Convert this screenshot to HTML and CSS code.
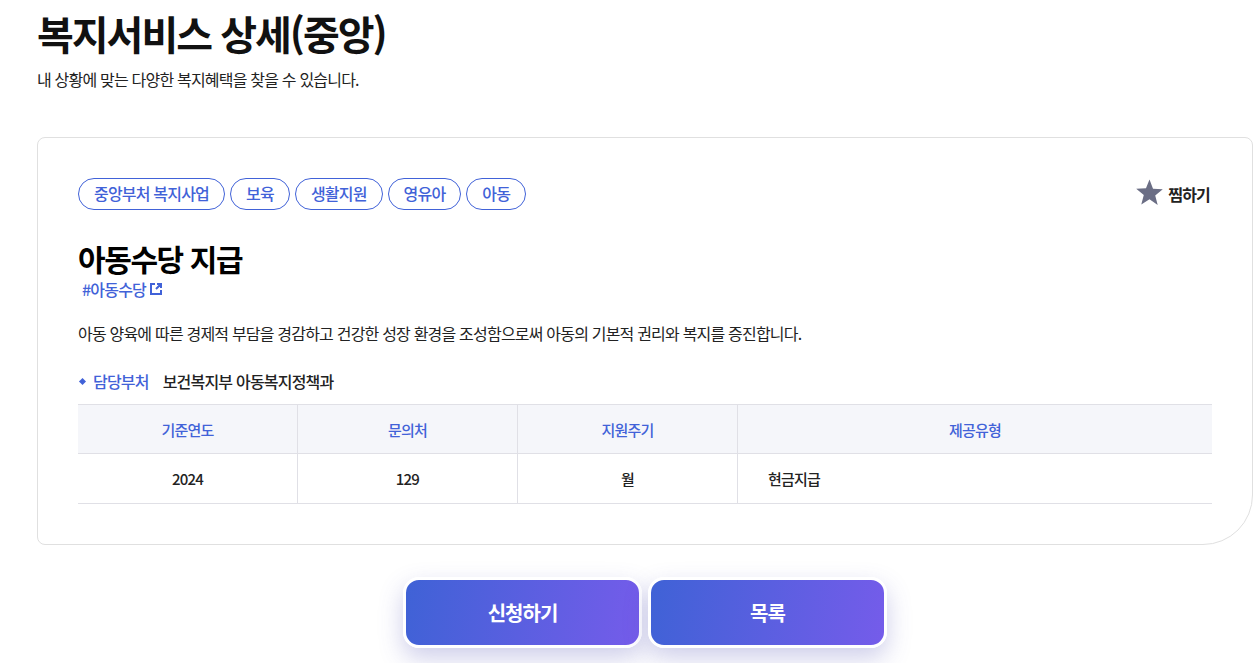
FILE: index.html
```html
<!DOCTYPE html>
<html lang="ko">
<head>
<meta charset="utf-8">
<title>복지서비스 상세(중앙)</title>
<link rel="stylesheet" href="styles.css">
</head>
<body>
<main class="page">
  <h1 class="page-title">복지서비스 상세(중앙)</h1>
  <p class="page-desc">내 상황에 맞는 다양한 복지혜택을 찾을 수 있습니다.</p>
  <section class="card">
    <div class="card-top">
      <ul class="tags">
        <li class="tag">중앙부처 복지사업</li>
        <li class="tag">보육</li>
        <li class="tag">생활지원</li>
        <li class="tag">영유아</li>
        <li class="tag">아동</li>
      </ul>
      <button class="fav" type="button">
        <svg class="fav-icon" viewBox="0 0 26 26" aria-hidden="true"><path d="M13 0.5l3.4 8.9 9.4 0.5-7.3 6 2.4 9.2L13 19.4l-7.9 5.2 2.4-9.2-7.3-6 9.4-0.5z"/></svg>
        <span>찜하기</span>
      </button>
    </div>
    <h2 class="svc-title">아동수당 지급</h2>
    <a class="svc-link" href="#">#아동수당<svg class="ext-icon" viewBox="0 0 14 14" aria-hidden="true"><path d="M6 2H2v10h10V8M8 2h4v4M12 2L7 7"/></svg></a>
    <p class="svc-desc">아동 양육에 따른 경제적 부담을 경감하고 건강한 성장 환경을 조성함으로써 아동의 기본적 권리와 복지를 증진합니다.</p>
    <div class="dept">
      <span class="dept-label">담당부처</span>
      <span class="dept-value">보건복지부 아동복지정책과</span>
    </div>
    <table class="info">
      <thead>
        <tr><th class="c1">기준연도</th><th class="c2">문의처</th><th class="c3">지원주기</th><th>제공유형</th></tr>
      </thead>
      <tbody>
        <tr><td>2024</td><td>129</td><td>월</td><td class="left">현금지급</td></tr>
      </tbody>
    </table>
  </section>
  <div class="actions">
    <a class="btn" href="#">신청하기</a>
    <a class="btn" href="#">목록</a>
  </div>
</main>
</body>
</html>
```
FILE: styles.css
```css
* { box-sizing: border-box; }
html, body { margin: 0; padding: 0; height: 663px; overflow: hidden; background: #fff; }
body { font-family: "Noto Sans CJK KR", "Noto Sans", sans-serif; color: #222; letter-spacing: -0.8px; }
.page { padding: 8px 4px 0 37px; }
.page-title { margin: 0; font-size: 40px; line-height: 50px; font-weight: 700; color: #111; letter-spacing: -2px; }
.page-desc { margin: 10px 0 0; font-size: 16px; line-height: 22px; color: #222; }
.card { margin-top: 47px; height: 408px; border: 1px solid #e0e0e0; border-radius: 8px 8px 50px 8px; padding: 40px 40px 0; background: #fff; }
.card-top { display: flex; justify-content: space-between; align-items: center; height: 32px; }
.tags { display: flex; gap: 5px; list-style: none; margin: 0; padding: 0; }
.tag { height: 32px; line-height: 29px; padding: 0 15px; border: 1px solid #4162d8; border-radius: 16px; font-size: 16px; font-weight: 500; color: #4162d8; }
.fav { display: flex; align-items: center; gap: 5px; border: 0; background: none; padding: 0; margin-right: 2px; font: inherit; font-size: 16px; font-weight: 700; color: #222; letter-spacing: -0.8px; }
.fav-icon { width: 27px; height: 27px; margin-bottom: 4px; fill: #6b6e85; }
.svc-title { margin: 30px 0 0; font-size: 30px; line-height: 36px; font-weight: 700; color: #000; letter-spacing: -1.4px; }
.svc-link { display: flex; width: fit-content; align-items: center; gap: 3px; margin: 3px 0 0 4px; font-size: 16px; line-height: 20px; font-weight: 500; color: #4162d8; text-decoration: none; }
.ext-icon { width: 14px; height: 14px; fill: none; stroke: #4162d8; stroke-width: 2; }
.svc-desc { margin: 23px 0 0; font-size: 16px; line-height: 22px; color: #222; }
.dept { margin-top: 26px; display: flex; align-items: center; gap: 14px; font-size: 16px; line-height: 22px; font-weight: 500; padding-left: 15px; position: relative; }
.dept::before { content: ""; position: absolute; left: 2px; top: 9px; width: 5px; height: 5px; background: #4162d8; transform: rotate(45deg); }
.dept-label { color: #4162d8; }
.dept-value { color: #222; }
.info { margin-top: 12px; width: 100%; border-collapse: collapse; table-layout: fixed; border-top: 1px solid #e0e0e6; font-size: 15px; }
.info th, .info td { text-align: center; border-bottom: 1px solid #e0e0e6; border-right: 1px solid #e0e0e6; padding: 0; font-weight: 500; }
.info th:last-child, .info td:last-child { border-right: 0; }
.info th { height: 49px; background: #f5f6fa; color: #4162d8; }
.info td { height: 50px; color: #222; }
.info td.left { text-align: left; padding-left: 30px; }
.c1, .c2, .c3 { width: 220px; }
.c1 { width: 219.5px; }
.actions { display: flex; justify-content: center; gap: 6px; margin-top: 32px; }
.btn { display: flex; align-items: center; justify-content: center; width: 239px; height: 71px; border: 3px solid #fff; border-radius: 16px; background: linear-gradient(100deg, #3f62d6, #755cea); color: #fff; font-size: 20px; font-weight: 700; letter-spacing: -1px; text-decoration: none; box-shadow: 0 10px 24px rgba(80, 80, 180, 0.28); }
```
